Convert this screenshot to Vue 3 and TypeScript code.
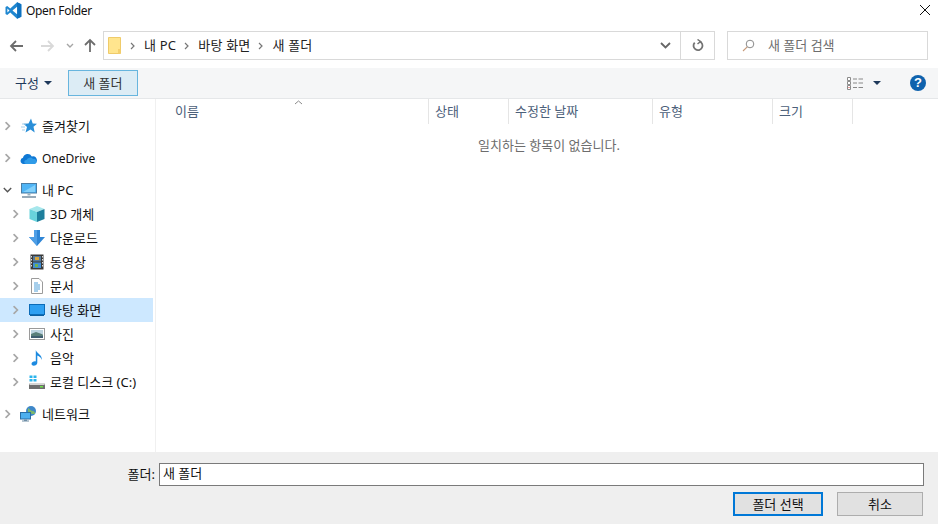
<script setup lang="ts">
interface TreeRow { label: string; icon: string; child: boolean; open?: boolean; selected?: boolean; gap?: boolean; latin?: boolean }
const rows: TreeRow[] = [
  { label: '즐겨찾기', icon: 'star', child: false },
  { label: 'OneDrive', icon: 'cloud', child: false, gap: true, latin: true },
  { label: '내 PC', icon: 'pc', child: false, open: true, gap: true },
  { label: '3D 개체', icon: 'cube', child: true },
  { label: '다운로드', icon: 'down', child: true },
  { label: '동영상', icon: 'film', child: true },
  { label: '문서', icon: 'doc', child: true },
  { label: '바탕 화면', icon: 'desk', child: true, selected: true },
  { label: '사진', icon: 'pic', child: true },
  { label: '음악', icon: 'music', child: true },
  { label: '로컬 디스크 (C:)', icon: 'disk', child: true },
  { label: '네트워크', icon: 'net', child: false, gap: true },
]
const columns = [
  { label: '이름', width: 269 },
  { label: '상태', width: 80 },
  { label: '수정한 날짜', width: 144 },
  { label: '유형', width: 120 },
  { label: '크기', width: 80 },
]
</script>

<template>
  <div class="dialog">
    <header class="title">
      <svg class="vs" width="17" height="17" viewBox="0 0 100 100">
        <path d="M71 1 96 13V87L71 99 31 62 13 76 3 71V29L13 24 31 38Z" fill="#1f87d0" />
        <path d="M71 1 96 13V87L71 99Z" fill="#0f72c0" />
        <path d="M71 28 44 50 71 72Z" fill="#fff" />
        <path d="M14 38V62L26 50Z" fill="#fff" />
      </svg>
      <span class="title-text">Open Folder</span>
      <svg class="close" width="12" height="12" viewBox="0 0 12 12"><path d="M1 1 11 11M11 1 1 11" stroke="#111" stroke-width="1" fill="none" /></svg>
    </header>

    <nav class="nav">
      <div class="nav-buttons">
        <svg width="16" height="14" viewBox="0 0 16 14"><path d="M14 7H2M7 2 2 7l5 5" stroke="#6d6d6d" stroke-width="1.8" fill="none" /></svg>
        <svg class="ml14" width="16" height="14" viewBox="0 0 16 14"><path d="M2 7h12M9 2l5 5-5 5" stroke="#d9d9d9" stroke-width="1.8" fill="none" /></svg>
        <svg class="ml11" width="8" height="6" viewBox="0 0 8 6"><path d="M1 1l3 3 3-3" stroke="#a5a5a5" stroke-width="1.4" fill="none" /></svg>
        <svg class="ml10" width="14" height="15" viewBox="0 0 14 15"><path d="M7 14V2M2 7l5-5 5 5" stroke="#6d6d6d" stroke-width="1.8" fill="none" /></svg>
      </div>
      <div class="address">
        <svg class="crumb-folder" width="13" height="17" viewBox="0 0 13 17">
          <path d="M.5 .5H12.500V16.500H.5Z" fill="#ffe58e" stroke="#efcb6a" />
          <path d="M10 12h2.500v4.500H10Z" fill="#f4cf6d" />
        </svg>
        <template v-for="c in ['내 PC', '바탕 화면', '새 폴더']" :key="c">
          <svg class="crumb-arrow" width="5" height="8" viewBox="0 0 5 8"><path d="M1 1l3 3-3 3" stroke="#777" stroke-width="1.2" fill="none" /></svg>
          <span class="crumb">{{ c }}</span>
        </template>
        <span class="grow"></span>
        <svg class="addr-down" width="11" height="7" viewBox="0 0 11 7"><path d="M1 1l4.500 4.500L10 1" stroke="#666" stroke-width="1.800" fill="none" /></svg>
        <span class="addr-refresh">
          <svg width="12" height="13" viewBox="0 0 12 13"><path d="M7.500 2.400A4.500 4.500 0 1 1 2.700 3.600" stroke="#737373" stroke-width="1.800" fill="none" /><path d="M5.500 .5 8.500 2.500 5.500 5" fill="none" stroke="#737373" stroke-width="1.500" /></svg>
        </span>
      </div>
      <div class="search">
        <svg width="13" height="13" viewBox="0 0 13 13"><circle cx="8" cy="5" r="3.800" fill="none" stroke="#8a8a8a" /><path d="M5.200 7.800 1 12" stroke="#c79a7a" stroke-width="1.100" /></svg>
        <span>새 폴더 검색</span>
      </div>
    </nav>

    <div class="toolbar">
      <span class="organize">구성</span>
      <span class="caret"></span>
      <button class="new-folder">새 폴더</button>
      <span class="grow"></span>
      <svg width="16" height="13" viewBox="0 0 16 13" class="view">
        <path d="M.5 .5h3v3h-3zM.5 4.500h3v3h-3zM.5 8.500h3v4h-3z" fill="#fff" stroke="#8b8b8b" />
        <path d="M6 2h4M11.500 2H16M6 6h4M11.500 6H16M6 10.500h4M11.500 10.500H16" stroke="#888" />
        <rect x="1.500" y="10" width="1" height="1" fill="#c33" />
      </svg>
      <span class="caret view-caret"></span>
      <span class="help">?</span>
    </div>

    <main class="body">
      <aside class="tree">
        <div v-for="r in rows" :key="r.label" class="row" :class="{ child: r.child, selected: r.selected, gap: r.gap }">
          <svg v-if="r.open" class="chev" width="9" height="6" viewBox="0 0 9 6"><path d="M.8 1l3.700 3.700L8.200 1" stroke="#555" stroke-width="1.400" fill="none" /></svg>
          <svg v-else class="chev" width="9" height="9" viewBox="0 0 9 9"><path d="M2.600 .7 6.400 4.500 2.600 8.300" stroke="#a8a8a8" stroke-width="1.700" fill="none" /></svg>
          <span class="icon">
            <svg v-if="r.icon === 'star'" width="17" height="16" viewBox="0 0 17 16"><path d="M11 .5 12.700 5.500 17 5.700 13.500 8.800 14.700 14.500 10.500 11.500 5.500 14.500 7 9 3.500 5.800 8.500 5.500Z" fill="#2a8fd8" /><path d="M2 6h4M1 9h4M2 12h3" stroke="#a6cfea" /></svg>
            <svg v-else-if="r.icon === 'cloud'" width="17" height="11" viewBox="0 0 17 11"><path d="M3.500 11A3.200 3.200 0 0 1 3 4.700 4.800 4.800 0 0 1 11.800 3.400 3.800 3.800 0 0 1 14 11Z" fill="#0f78d4" /><path d="M6 11A2 2 0 0 1 6.500 7 3.800 3.800 0 0 1 13 6 2.600 2.600 0 0 1 14.500 11Z" fill="#2f9be8" /></svg>
            <svg v-else-if="r.icon === 'pc'" width="16" height="15" viewBox="0 0 16 15"><rect x=".5" y=".5" width="15" height="9.500" fill="#4fb4f5" stroke="#4b7da4" /><path d="M2 9 14 2V9Z" fill="#83d0fa" /><path d="M6.500 10.500h3v2h-3z" fill="#9bb0bf" /><path d="M1 13h14v2H1z" fill="#98aab8" /></svg>
            <svg v-else-if="r.icon === 'cube'" width="16" height="16" viewBox="0 0 16 16"><path d="M8 0 15.500 3 8 6 .5 3Z" fill="#a6e7ec" /><path d="M.5 3 8 6V16L.5 13Z" fill="#69d3dc" /><path d="M15.500 3 8 6V16L15.500 13Z" fill="#1e7f9c" /></svg>
            <svg v-else-if="r.icon === 'down'" width="16" height="16" viewBox="0 0 16 16"><path d="M5 0h6V7H16L8 16 0 7H5Z" fill="#2f86d6" /><path d="M0 7 8 16V0H5V7Z" fill="#4f9fe6" /></svg>
            <svg v-else-if="r.icon === 'film'" width="14" height="16" viewBox="0 0 14 16"><rect x=".5" y=".5" width="13" height="15" fill="#3a3a3a" /><rect x="3" y="2" width="8" height="5.500" fill="#55799a" /><rect x="3" y="8.500" width="8" height="5.500" fill="#3f8fd5" /><path d="M5 3h4v3H5z" fill="#d8a53a" /><path d="M5 10h3v3H5z" fill="#6fb050" /><path d="M1.500 2v1.500M1.500 5v1.500M1.500 8v1.500M1.500 11v1.500M12.500 2v1.500M12.500 5v1.500M12.500 8v1.500M12.500 11v1.500" stroke="#ddd" /></svg>
            <svg v-else-if="r.icon === 'doc'" width="12" height="16" viewBox="0 0 12 16"><path d="M.5 .5H8L11.500 4V15.500H.5Z" fill="#fff" stroke="#9b9b9b" /><path d="M3 5h4M3 7h6M3 9h6M3 11h6M3 13h4" stroke="#4f9fd8" /></svg>
            <svg v-else-if="r.icon === 'desk'" width="16" height="12" viewBox="0 0 16 12"><rect x=".5" y=".5" width="15" height="10" fill="#2fa0f2" stroke="#0c6cb8" /><path d="M1 11.500h14" stroke="#0c5fa0" /></svg>
            <svg v-else-if="r.icon === 'pic'" width="16" height="12" viewBox="0 0 16 12"><rect x=".5" y=".5" width="15" height="11" fill="#fff" stroke="#9a9a9a" /><rect x="2" y="2" width="12" height="4" fill="#bcd3e0" /><path d="M2 6 7 4 14 6.500V10H2Z" fill="#5a7f7a" /><path d="M2 8h12v2H2z" fill="#3f5d70" /></svg>
            <svg v-else-if="r.icon === 'music'" width="12" height="16" viewBox="0 0 12 16"><path d="M4.800 0C5.500 3.500 12 5 10.500 10 10.500 7.500 7.500 6 6.300 5.500V13C6.300 15.500 1 17 .5 14 .5 12 3.500 10.800 4.800 11.500Z" fill="#1c8ae0" /></svg>
            <svg v-else-if="r.icon === 'disk'" width="16" height="14" viewBox="0 0 16 14"><path d="M.5 .5h3v2.500h-3zM4.500 .5h3v2.500h-3zM.5 4h3v2.500h-3zM4.500 4h3v2.500h-3z" fill="#2ab4ec" /><path d="M1 8H15L16 10V14H0V10Z" fill="#6e6e6e" /><path d="M1 8H15L15.500 10H.5Z" fill="#d6d6d6" /><rect x="11" y="11" width="3" height="1.500" fill="#6ee04a" /></svg>
            <svg v-else width="17" height="16" viewBox="0 0 17 16"><circle cx="11" cy="5" r="5" fill="#3e87c9" /><path d="M8 2c2 1 3 3 5 3 1 0 2 1 2 3-3 0-5 0-7-2z" fill="#7cb86a" /><rect x=".5" y="6.500" width="10" height="6.500" fill="#4db0ef" stroke="#2a6ea4" /><path d="M4 13.500h3v1H4zM2 14.500h7v1H2z" fill="#6e8ea6" /></svg>
          </span>
          <span class="label" :class="{ latin: r.latin }">{{ r.label }}</span>
        </div>
      </aside>
      <section class="list">
        <svg class="sort" width="9" height="5" viewBox="0 0 9 5"><path d="M1 4 4.500 1 8 4" stroke="#8a8a8a" fill="none" /></svg>
        <div class="headers">
          <span v-for="c in columns" :key="c.label" class="col" :style="{ width: c.width + 'px' }"><span class="col-text">{{ c.label }}</span></span>
        </div>
        <p class="empty">일치하는 항목이 없습니다.</p>
      </section>
    </main>

    <footer class="footer">
      <div class="name-row">
        <label class="name-label">폴더:</label>
        <div class="name-input">새 폴더</div>
      </div>
      <div class="actions">
        <button class="btn primary">폴더 선택</button>
        <button class="btn cancel">취소</button>
      </div>
    </footer>
  </div>
</template>

<style scoped>
.dialog {
  width: 938px;
  height: 524px;
  display: flex;
  flex-direction: column;
  background: #fff;
  font-family: "Noto Sans", "Noto Sans CJK KR", sans-serif;
  font-size: 13px;
  color: #111;
  overflow: hidden;
}
.title { height: 30px; flex: none; display: flex; align-items: center; padding: 0 0 10px 5px; box-sizing: border-box; }
.title-text { margin-left: 4px; font-size: 12px; letter-spacing: -0.35px; }
.close { margin-left: auto; margin-right: 7px; }
.nav { height: 38px; flex: none; display: flex; padding-top: 1px; box-sizing: border-box; }
.nav-buttons { width: 103px; height: 29px; flex: none; display: flex; align-items: center; padding-left: 9px; box-sizing: border-box; }
.ml14 { margin-left: 14px; }
.ml11 { margin-left: 11px; }
.ml10 { margin-left: 9px; }
.address { width: 612px; height: 29px; flex: none; display: flex; align-items: center; border: 1px solid #d9d9d9; box-sizing: border-box; padding-left: 4px; }
.crumb-arrow { margin: 0 9px 0 8px; }
.crumb-folder { margin-right: 1px; }
.crumb { color: #222; letter-spacing: .2px; margin-bottom: 2px; }
.grow { flex: 1; }
.addr-down { margin-right: 9px; }
.addr-refresh { width: 33px; height: 27px; display: flex; align-items: center; justify-content: center; border-left: 1px solid #d9d9d9; }
.search { width: 201px; height: 29px; margin-left: 12px; flex: none; display: flex; align-items: center; border: 1px solid #d9d9d9; box-sizing: border-box; padding-left: 14px; color: #6d6d6d; }
.search span { margin-left: 13px; margin-bottom: 2px; }
.toolbar { height: 31px; flex: none; display: flex; align-items: center; background: #f5f6f7; border-bottom: 1px solid #e5e7e9; box-sizing: border-box; padding-left: 15px; }
.organize { color: #1e395b; margin-bottom: 2px; }
.caret { width: 0; height: 0; border: 4px solid transparent; border-top: 4px solid #1e395b; border-bottom: 0; margin-left: 5px; }
.new-folder { width: 70px; height: 26px; margin-left: 16px; background: #dcecf5; border: 1px solid #67b5de; color: #333; font: inherit; padding: 0 0 2px; }
.view-caret { margin-left: 10px; }
.help { width: 16px; height: 16px; margin: 0 12px 0 29px; border-radius: 50%; background: #0f62ad; color: #fff; font: bold 13px/16px "Liberation Sans", sans-serif; text-align: center; }
.body { flex: 1; min-height: 0; display: flex; }
.tree { width: 156px; flex: none; border-right: 1px solid #f0f0f0; box-sizing: border-box; padding-top: 15px; }
.row { width: 153px; height: 24px; display: flex; align-items: center; position: relative; padding-left: 20px; box-sizing: border-box; color: #111; }
.row.gap { margin-top: 8px; }
.row.child { padding-left: 28px; }
.row.selected { background: #cde8ff; }
.chev { position: absolute; left: 3px; top: 50%; transform: translateY(-50%); }
.row.child .chev { left: 11px; }
.icon { width: 17px; display: flex; justify-content: center; align-items: center; flex: none; }
.label { margin-left: 5px; margin-bottom: 2px; white-space: nowrap; }
.label.latin { font-size: 12px; margin-bottom: 0; }
.list { flex: 1; position: relative; min-width: 0; }
.sort { position: absolute; left: 138px; top: 1px; }
.headers { height: 25px; display: flex; padding-left: 4px; }
.col { box-sizing: border-box; padding-left: 15px; border-right: 1px solid #e5e5e5; color: #4c607a; line-height: 24px; }
.col + .col { padding-left: 6px; }
.empty { margin: 11px 0 0; text-align: center; color: #6d6d6d; width: 786px; }
.footer { height: 72px; flex: none; background: #efefef; box-sizing: border-box; padding-top: 11px; }
.name-row { display: flex; align-items: center; height: 23px; }
.name-label { width: 155px; flex: none; text-align: right; margin-bottom: 2px; }
.name-input { width: 765px; height: 23px; margin-left: 4px; flex: none; background: #fff; border: 1px solid #7a7a7a; box-sizing: border-box; line-height: 19px; padding-left: 3px; }
.actions { display: flex; justify-content: flex-end; margin-top: 6px; padding-right: 15px; gap: 14px; }
.btn { height: 24px; box-sizing: border-box; font: inherit; background: #e1e1e1; color: #111; padding: 0 0 2px; }
.primary { width: 90px; border: 2px solid #0078d7; }
.cancel { width: 86px; border: 1px solid #adadad; }
</style>
